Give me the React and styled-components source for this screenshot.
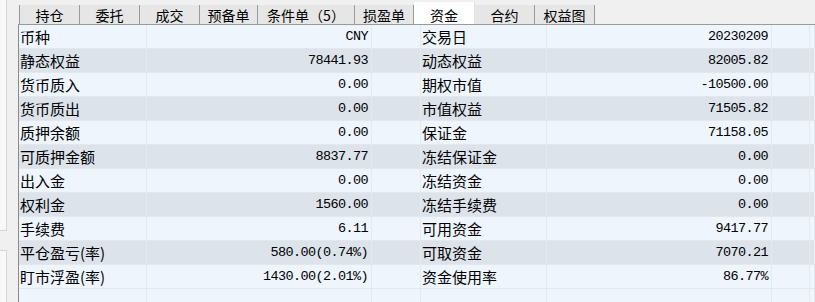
import React from "react";
import styled, { createGlobalStyle } from "styled-components";

const Global = createGlobalStyle`
  html, body { margin: 0; padding: 0; background: #f0f0f0; }
  body { font-family: "Noto Sans CJK SC", "Liberation Sans", sans-serif; color: #000; }
  #root { height: 302px; }
`;

const Page = styled.div`
  display: flex;
  height: 302px;
  width: 815px;
  overflow: hidden;
  background: #f0f0f0;
`;

const Sidebar = styled.div`
  width: 7px;
  display: flex;
  flex-direction: column;
  gap: 19px;
  margin-right: 11px;
`;

const SidePane = styled.div`
  box-sizing: border-box;
  background: #f8f8f8;
  border-right: 1px solid #d6d6d6;
  ${(p) => (p.$top ? "height: 231px; border-bottom: 1px solid #d6d6d6;" : "flex: 1; border-top: 1px solid #d6d6d6;")}
`;

const Main = styled.div`
  flex: 1;
  display: flex;
  flex-direction: column;
  min-width: 0;
`;

const TabBar = styled.div`
  display: flex;
  align-items: flex-end;
  height: 24px;
  border-bottom: 1px solid #9a9a9a;
  padding-left: 1px;
`;

const Tab = styled.div`
  box-sizing: border-box;
  width: ${(p) => p.$w}px;
  height: ${(p) => (p.$active ? 22 : 19)}px;
  background: ${(p) => (p.$active ? "#ffffff" : "#e6e6e6")};
  border-left: ${(p) => (p.$first ? "1px solid #9a9a9a" : "none")};
  border-right: 1px solid ${(p) => (p.$active ? "#e0e0e0" : "#9a9a9a")};
  display: flex;
  align-items: center;
  justify-content: center;
  font-size: 14px;
  line-height: 1;
  padding-top: ${(p) => (p.$active ? 3 : 0)}px;
  white-space: nowrap;
`;

const Table = styled.div`
  flex: 1;
  display: flex;
  flex-direction: column;
  border-left: 1px solid #8a8a8a;
  background: #eef5fd;
`;

const Row = styled.div`
  display: grid;
  grid-template-columns: 128px 225px 49px 126px 225px 38px 1fr;
  height: 24px;
  box-sizing: border-box;
  border-bottom: 1px solid #e4e8ed;
  background: ${(p) => (p.$dark ? "#dce3eb" : "#eef5fd")};
`;

const Filler = styled(Row)`
  flex: 1;
  height: auto;
  border-bottom: none;
  background: #eef5fd;
`;

const Cell = styled.div`
  box-sizing: border-box;
  border-right: 1px solid #e6eaef;
  display: flex;
  align-items: center;
  overflow: hidden;
  white-space: nowrap;
`;

const Label = styled(Cell)`
  font-size: 15px;
  padding-left: 1px;
  line-height: 1;
`;

const Value = styled(Cell)`
  justify-content: flex-end;
  padding-right: 3px;
  font-family: "Liberation Mono", "DejaVu Sans Mono", monospace;
  font-size: 13.5px;
  letter-spacing: -0.6px;
`;

const tabs = [
  ["持仓", 61],
  ["委托", 60],
  ["成交", 60],
  ["预备单", 58],
  ["条件单（5）", 97],
  ["损盈单", 59],
  ["资金", 61, true],
  ["合约", 60],
  ["权益图", 60],
];

const rows = [
  ["币种", "CNY", "交易日", "20230209"],
  ["静态权益", "78441.93", "动态权益", "82005.82"],
  ["货币质入", "0.00", "期权市值", "-10500.00"],
  ["货币质出", "0.00", "市值权益", "71505.82"],
  ["质押余额", "0.00", "保证金", "71158.05"],
  ["可质押金额", "8837.77", "冻结保证金", "0.00"],
  ["出入金", "0.00", "冻结资金", "0.00"],
  ["权利金", "1560.00", "冻结手续费", "0.00"],
  ["手续费", "6.11", "可用资金", "9417.77"],
  ["平仓盈亏(率)", "580.00(0.74%)", "可取资金", "7070.21"],
  ["盯市浮盈(率)", "1430.00(2.01%)", "资金使用率", "86.77%"],
];

export default function App() {
  return (
    <Page>
      <Global />
      <Sidebar>
        <SidePane $top />
        <SidePane />
      </Sidebar>
      <Main>
        <TabBar>
          {tabs.map(([t, w, a], i) => (
            <Tab key={t} $w={w} $active={a} $first={i === 0}>
              {t}
            </Tab>
          ))}
        </TabBar>
        <Table>
          {rows.map((r, i) => (
            <Row key={r[0]} $dark={i % 2 === 1}>
              <Label>{r[0]}</Label>
              <Value>{r[1]}</Value>
              <Cell />
              <Label>{r[2]}</Label>
              <Value>{r[3]}</Value>
              <Cell />
              <Cell />
            </Row>
          ))}
          <Filler>
            <Cell />
            <Cell />
            <Cell />
            <Cell />
            <Cell />
            <Cell />
            <Cell />
          </Filler>
        </Table>
      </Main>
    </Page>
  );
}
